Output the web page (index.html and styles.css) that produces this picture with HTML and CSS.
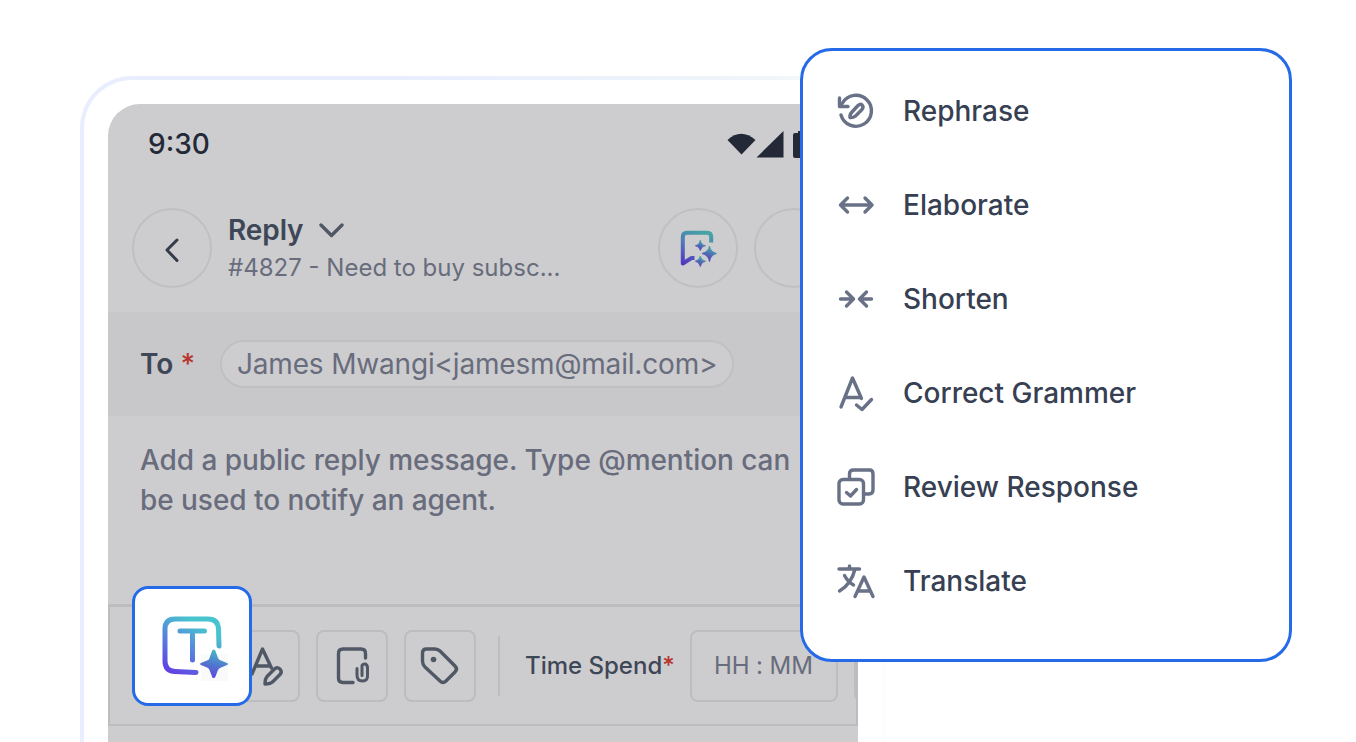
FILE: index.html
```html
<!DOCTYPE html>
<html lang="en">
<head>
  <meta charset="UTF-8">
  <meta name="viewport" content="width=device-width, initial-scale=1.0">
  <title>Reply Assistant</title>
  <link rel="stylesheet" href="styles.css">
</head>
<body>
  <div class="stage">
    <div class="phone">
      <div class="screen">
        <!-- Status bar -->
        <div class="status-bar">
          <span class="time">9:30</span>
          <svg class="status-icons" width="100" height="32" viewBox="0 0 100 32" fill="#232936">
            <path d="M0.500 9Q14-3.500 28.500 9L14.500 23.500Z"/>
            <path d="M29.500 26.500L56.500 0V26.500Z"/>
            <path d="M66 4Q66 2 68 2H71V0H79V2H82Q84 2 84 4V25Q84 27 82 27H68Q66 27 66 25Z"/>
          </svg>
        </div>

        <!-- Ticket header -->
        <div class="header">
          <div class="circle">
            <svg width="80" height="80" viewBox="0 0 80 80" class="line dark">
              <path d="M45 32L35 42L45 52.500"/>
            </svg>
          </div>
          <div class="ticket">
            <div class="title">Reply
              <svg width="26" height="16" viewBox="0 0 26 16" class="line"><path d="M3 3L13.500 13.500L24 3"/></svg>
            </div>
            <div class="subject">#4827 - Need to buy subsc...</div>
          </div>
          <div class="circle">
            <svg width="80" height="80" viewBox="0 0 80 80">
              <defs>
                <linearGradient id="chatGrad" gradientUnits="userSpaceOnUse" x1="42" y1="23" x2="30" y2="58">
                  <stop offset="0" stop-color="#46a3a6"/>
                  <stop offset="0.45" stop-color="#5075b8"/>
                  <stop offset="1" stop-color="#5435c0"/>
                </linearGradient>
                <linearGradient id="starGrad" x1="0.7" y1="0" x2="0.3" y2="1">
                  <stop offset="0.150" stop-color="#44a3a8"/>
                  <stop offset="0.850" stop-color="#5540bb"/>
                </linearGradient>
              </defs>
              <path d="M53.200 34.500V29Q53.200 24.800 49 24.800H29Q24.800 24.800 24.800 29V55.500L33.500 50H36.500" fill="none" stroke="url(#chatGrad)" stroke-width="4" stroke-linejoin="round"/>
              <path d="M51.500 38Q52.500 44 58.500 45.500Q52.500 47 51.500 53.500Q50.500 47 44 45.500Q50.500 44 51.500 38Z" fill="url(#starGrad)" stroke="url(#starGrad)" stroke-width="1"/>
              <path d="M42.300 32Q43.200 37 47.500 37.700Q43.200 38.400 42.300 42.500Q41.400 38.400 37.300 37.700Q41.400 37 42.300 32Z" fill="url(#starGrad)" stroke="url(#starGrad)" stroke-width="0.800"/>
              <path d="M42.300 48Q43.200 52.500 47.500 53.200Q43.200 54 42.300 58.500Q41.400 54 37.300 53.200Q41.400 52.500 42.300 48Z" fill="url(#starGrad)" stroke="url(#starGrad)" stroke-width="0.800"/>
            </svg>
          </div>
          <div class="circle"></div>
        </div>

        <!-- Recipient -->
        <div class="recipient">
          <span class="to">To <span class="required">*</span></span>
          <span class="chip">James Mwangi&lt;jamesm@mail.com&gt;</span>
        </div>

        <div class="message">
          <div>Add a public reply message. Type @mention can</div>
          <div>be used to notify an agent.</div>
        </div>

        <!-- Bottom toolbar -->
        <div class="toolbar">
          <div class="tool"></div>
          <div class="tool">
            <svg width="72" height="72" viewBox="0 0 72 72" class="line">
              <path d="M24 44L34.500 19L43.500 38M28 36H41"/>
              <path d="M37 54Q37 48.500 39.500 46L46.500 39Q49 36.500 52 39Q54.500 42 52 44.500L45 51.500Q42.500 54 37 54Z"/>
            </svg>
          </div>
          <div class="tool">
            <svg width="72" height="72" viewBox="0 0 72 72" class="line">
              <path d="M49.500 28V23.500Q49.500 19 45 19H27Q22.500 19 22.500 23.500V48Q22.500 52.500 27 52.500H37"/>
              <path d="M41 38.500V45Q41 51 46.500 51T51.500 45V38Q51.500 34 48.500 34T46 37.500V45.500" stroke-width="3"/>
            </svg>
          </div>
          <div class="tool">
            <svg width="72" height="72" viewBox="0 0 72 72" class="line">
              <path d="M18.500 23Q18.500 19 22.500 19H31Q34 19 36 21L51 36Q54 39 51 42L42 51Q39 54 36 51L21 37Q18.500 34.500 18.500 31Z"/>
              <circle cx="29.500" cy="29.500" r="2.800" fill="#505865" stroke="none"/>
            </svg>
          </div>
          <div class="divider"></div>
          <span class="spend">Time Spend<span class="required">*</span></span>
          <div class="hours">HH : MM</div>
          <div class="tool"></div>
        </div>
      </div>
    </div>

    <!-- Highlighted AI text button -->
    <div class="ai-button">
      <svg width="114" height="114" viewBox="0 0 114 114">
        <defs>
          <linearGradient id="aiGrad" gradientUnits="userSpaceOnUse" x1="62" y1="34" x2="31" y2="88">
            <stop offset="0" stop-color="#48c4ce"/>
            <stop offset="0.500" stop-color="#5879df"/>
            <stop offset="1" stop-color="#6432e4"/>
          </linearGradient>
          <linearGradient id="aiStar" x1="0.650" y1="0" x2="0.350" y2="1">
            <stop offset="0" stop-color="#48bdc9"/>
            <stop offset="0.550" stop-color="#5075ce"/>
            <stop offset="1" stop-color="#6245dc"/>
          </linearGradient>
        </defs>
        <rect x="66" y="65" width="27" height="27" fill="#fafafa"/>
        <g fill="none" stroke="url(#aiGrad)" stroke-width="5" stroke-linecap="round" stroke-linejoin="round">
          <path d="M84 57L83.500 40Q83 30 73 30H40Q30 30 30 40V72Q30 82 40 82.500L61 83.500"/>
          <path d="M45 42H69.500M57.500 42V71"/>
        </g>
        <path d="M78.500 60.500Q80 60.500 80.500 62L83 69Q84 71 86 71.500L92 74Q94 75 92 76L86 78.500Q84 79 83 81L80.500 87.500Q80 89 78.500 89T77 87.500L74.500 81Q74 79 72 78.500L66 76Q64 75 66 74L72 71.500Q74 71 74.500 69L77 62Q77.500 60.500 78.500 60.500Z" fill="url(#aiStar)"/>
      </svg>
    </div>

    <!-- AI options -->
    <ul class="menu">
      <li>
        <svg width="40" height="40" viewBox="0 0 40 40" class="line muted">
          <path d="M5 24A15.500 15.500 0 1 0 6.500 12L4 15"/>
          <path d="M3.500 7V15.500H12"/>
          <path d="M14 26.500Q13.500 23.500 16 21L22 14.500Q24.500 12.500 26 14Q28 16 26 18.500L19.500 25Q17 27 14 26.500Z"/>
        </svg>
        <span>Rephrase</span>
      </li>
      <li>
        <svg width="40" height="40" viewBox="0 0 40 40" class="line muted">
          <path d="M5 20H35.500M11.500 13L4.500 20L11.500 27M29 13L36 20L29 27"/>
        </svg>
        <span>Elaborate</span>
      </li>
      <li>
        <svg width="40" height="40" viewBox="0 0 40 40" class="line muted">
          <path d="M4.500 20H16M10.500 13L17.500 20L10.500 27M35.500 20H25M30.500 13L23.500 20L30.500 27"/>
        </svg>
        <span>Shorten</span>
      </li>
      <li>
        <svg width="40" height="40" viewBox="0 0 40 40" class="line muted">
          <path d="M5 34L16.500 5L25.500 25.500M9 24.500H24M20.500 32L26 36.500L35.500 26.500"/>
        </svg>
        <span>Correct Grammer</span>
      </li>
      <li>
        <svg width="40" height="40" viewBox="0 0 40 40" class="line muted">
          <rect x="3" y="12.500" width="24.500" height="24.500" rx="4"/>
          <path d="M13.500 12V7Q13.500 3 17.500 3H33.500Q37 3 37 7V23Q37 27 33 27H28.500"/>
          <path d="M10.500 25.500L14.500 29L20.500 22.500"/>
        </svg>
        <span>Review Response</span>
      </li>
      <li>
        <svg width="40" height="40" viewBox="0 0 40 40" class="line muted">
          <path d="M3 8H23.500M13.500 5V8M19 8Q15.500 23 3.500 30M8.500 14.500Q11.500 20.500 17.500 24"/>
          <path d="M19 35.500L28 16L37 35.500M22 30H34"/>
        </svg>
        <span>Translate</span>
      </li>
    </ul>
  </div>
</body>
</html>
```
FILE: styles.css
```css
* {
  box-sizing: border-box;
}
body {
  margin: 0;
  background: #fff;
  font-family: Inter, sans-serif;
  overflow: hidden;
}
.stage {
  position: relative;
  height: 742px;
  padding: 76px 0 0 80px;
  overflow: hidden;
}
svg {
  display: block;
  flex: none;
}

/* Phone frame, the outline fades out to the right */
.phone {
  width: 806px;
  height: 900px;
  padding: 24px;
  border: 4px solid transparent;
  border-radius: 52px;
  background:
    linear-gradient(#fff, #fff) padding-box,
    linear-gradient(to right, #e8eefe 40%, #eff5f9 85%, #fcfefe) border-box;
}
.screen {
  height: 840px;
  background: #cdcdcf;
  border-radius: 32px 32px 0 0;
  overflow: hidden;
}
.status-bar {
  display: flex;
  justify-content: space-between;
  height: 88px;
  padding: 24px 31px 0 40px;
}
.time {
  font-size: 28px;
  line-height: 32px;
  font-weight: 500;
  color: #232936;
}
.status-icons {
  margin-top: 3px;
}
.header {
  display: flex;
  gap: 16px;
  height: 120px;
  padding: 16px 24px;
}
.circle {
  flex: none;
  width: 80px;
  height: 80px;
  border: 2px solid #c0c0c3;
  border-radius: 50%;
}
.circle svg {
  margin: -2px;
}
.ticket {
  flex: 1;
  white-space: nowrap;
}
.title {
  display: flex;
  align-items: center;
  gap: 15px;
  padding-top: 4px;
  font-size: 28px;
  line-height: 36px;
  font-weight: 600;
  letter-spacing: -0.1px;
  color: #3e4757;
}
.subject {
  margin-top: 4px;
  font-size: 24px;
  line-height: 32px;
  color: #686c7c;
}

/* Recipient row */
.recipient {
  display: flex;
  align-items: center;
  height: 104px;
  padding-left: 32px;
  background: #c8c8ca;
}
.to {
  width: 80px;
  font-size: 28px;
  font-weight: 600;
  color: #3e4757;
}
.required {
  font-weight: 500;
  color: #b8352f;
}
.chip {
  width: 514px;
  height: 48px;
  padding-left: 15px;
  border: 2px solid #bfc0c3;
  border-radius: 24px;
  background: #cdcdcf;
  font-size: 28px;
  line-height: 44px;
  letter-spacing: -0.18px;
  white-space: nowrap;
  color: #686c7c;
}
.message {
  height: 188px;
  padding: 24px 0 0 32px;
  font-size: 28px;
  line-height: 40px;
  font-weight: 500;
  letter-spacing: -0.05px;
  white-space: nowrap;
  color: #686c7c;
}

/* Toolbar */
.toolbar {
  display: flex;
  height: 122px;
  padding: 23px 0 0 30px;
  gap: 16px;
  border: 2px solid #bdbdc0;
  border-top-width: 3px;
}
.tool {
  flex: none;
  width: 72px;
  height: 72px;
  border: 2px solid #bdbdc0;
  border-radius: 8px;
}
.tool svg {
  margin: -2px;
}
.divider {
  flex: none;
  width: 2px;
  height: 60px;
  margin: 6px 9px 0 6px;
  background: #bdbdc0;
}
.spend {
  width: 149px;
  flex: none;
  font-size: 24px;
  line-height: 72px;
  font-weight: 500;
  white-space: nowrap;
  color: #3e4757;
}
.hours {
  flex: none;
  width: 148px;
  height: 72px;
  padding-left: 22px;
  border: 2px solid #bdbdc0;
  border-radius: 8px;
  font-size: 24px;
  line-height: 68px;
  letter-spacing: -0.1px;
  white-space: nowrap;
  color: #686c7c;
}

/* Icons */
.line {
  fill: none;
  stroke: #505865;
  stroke-width: 3.4;
  stroke-linecap: round;
  stroke-linejoin: round;
}
.dark {
  stroke: #353c49;
  stroke-width: 3;
}
.muted {
  stroke: #697187;
}

.ai-button {
  position: absolute;
  left: 132px;
  top: 586px;
  width: 120px;
  height: 120px;
  border: 3px solid #256ae7;
  border-radius: 16px;
  background: #fff;
}

/* Options menu */
.menu {
  position: absolute;
  left: 800px;
  top: 48px;
  width: 492px;
  height: 614px;
  margin: 0;
  padding: 13px 33px;
  list-style: none;
  border: 3px solid #256ae7;
  border-radius: 32px;
  background: #fff;
}
.menu li {
  display: flex;
  align-items: center;
  gap: 27px;
  height: 94px;
  font-size: 28px;
  font-weight: 500;
  color: #364052;
}
```
